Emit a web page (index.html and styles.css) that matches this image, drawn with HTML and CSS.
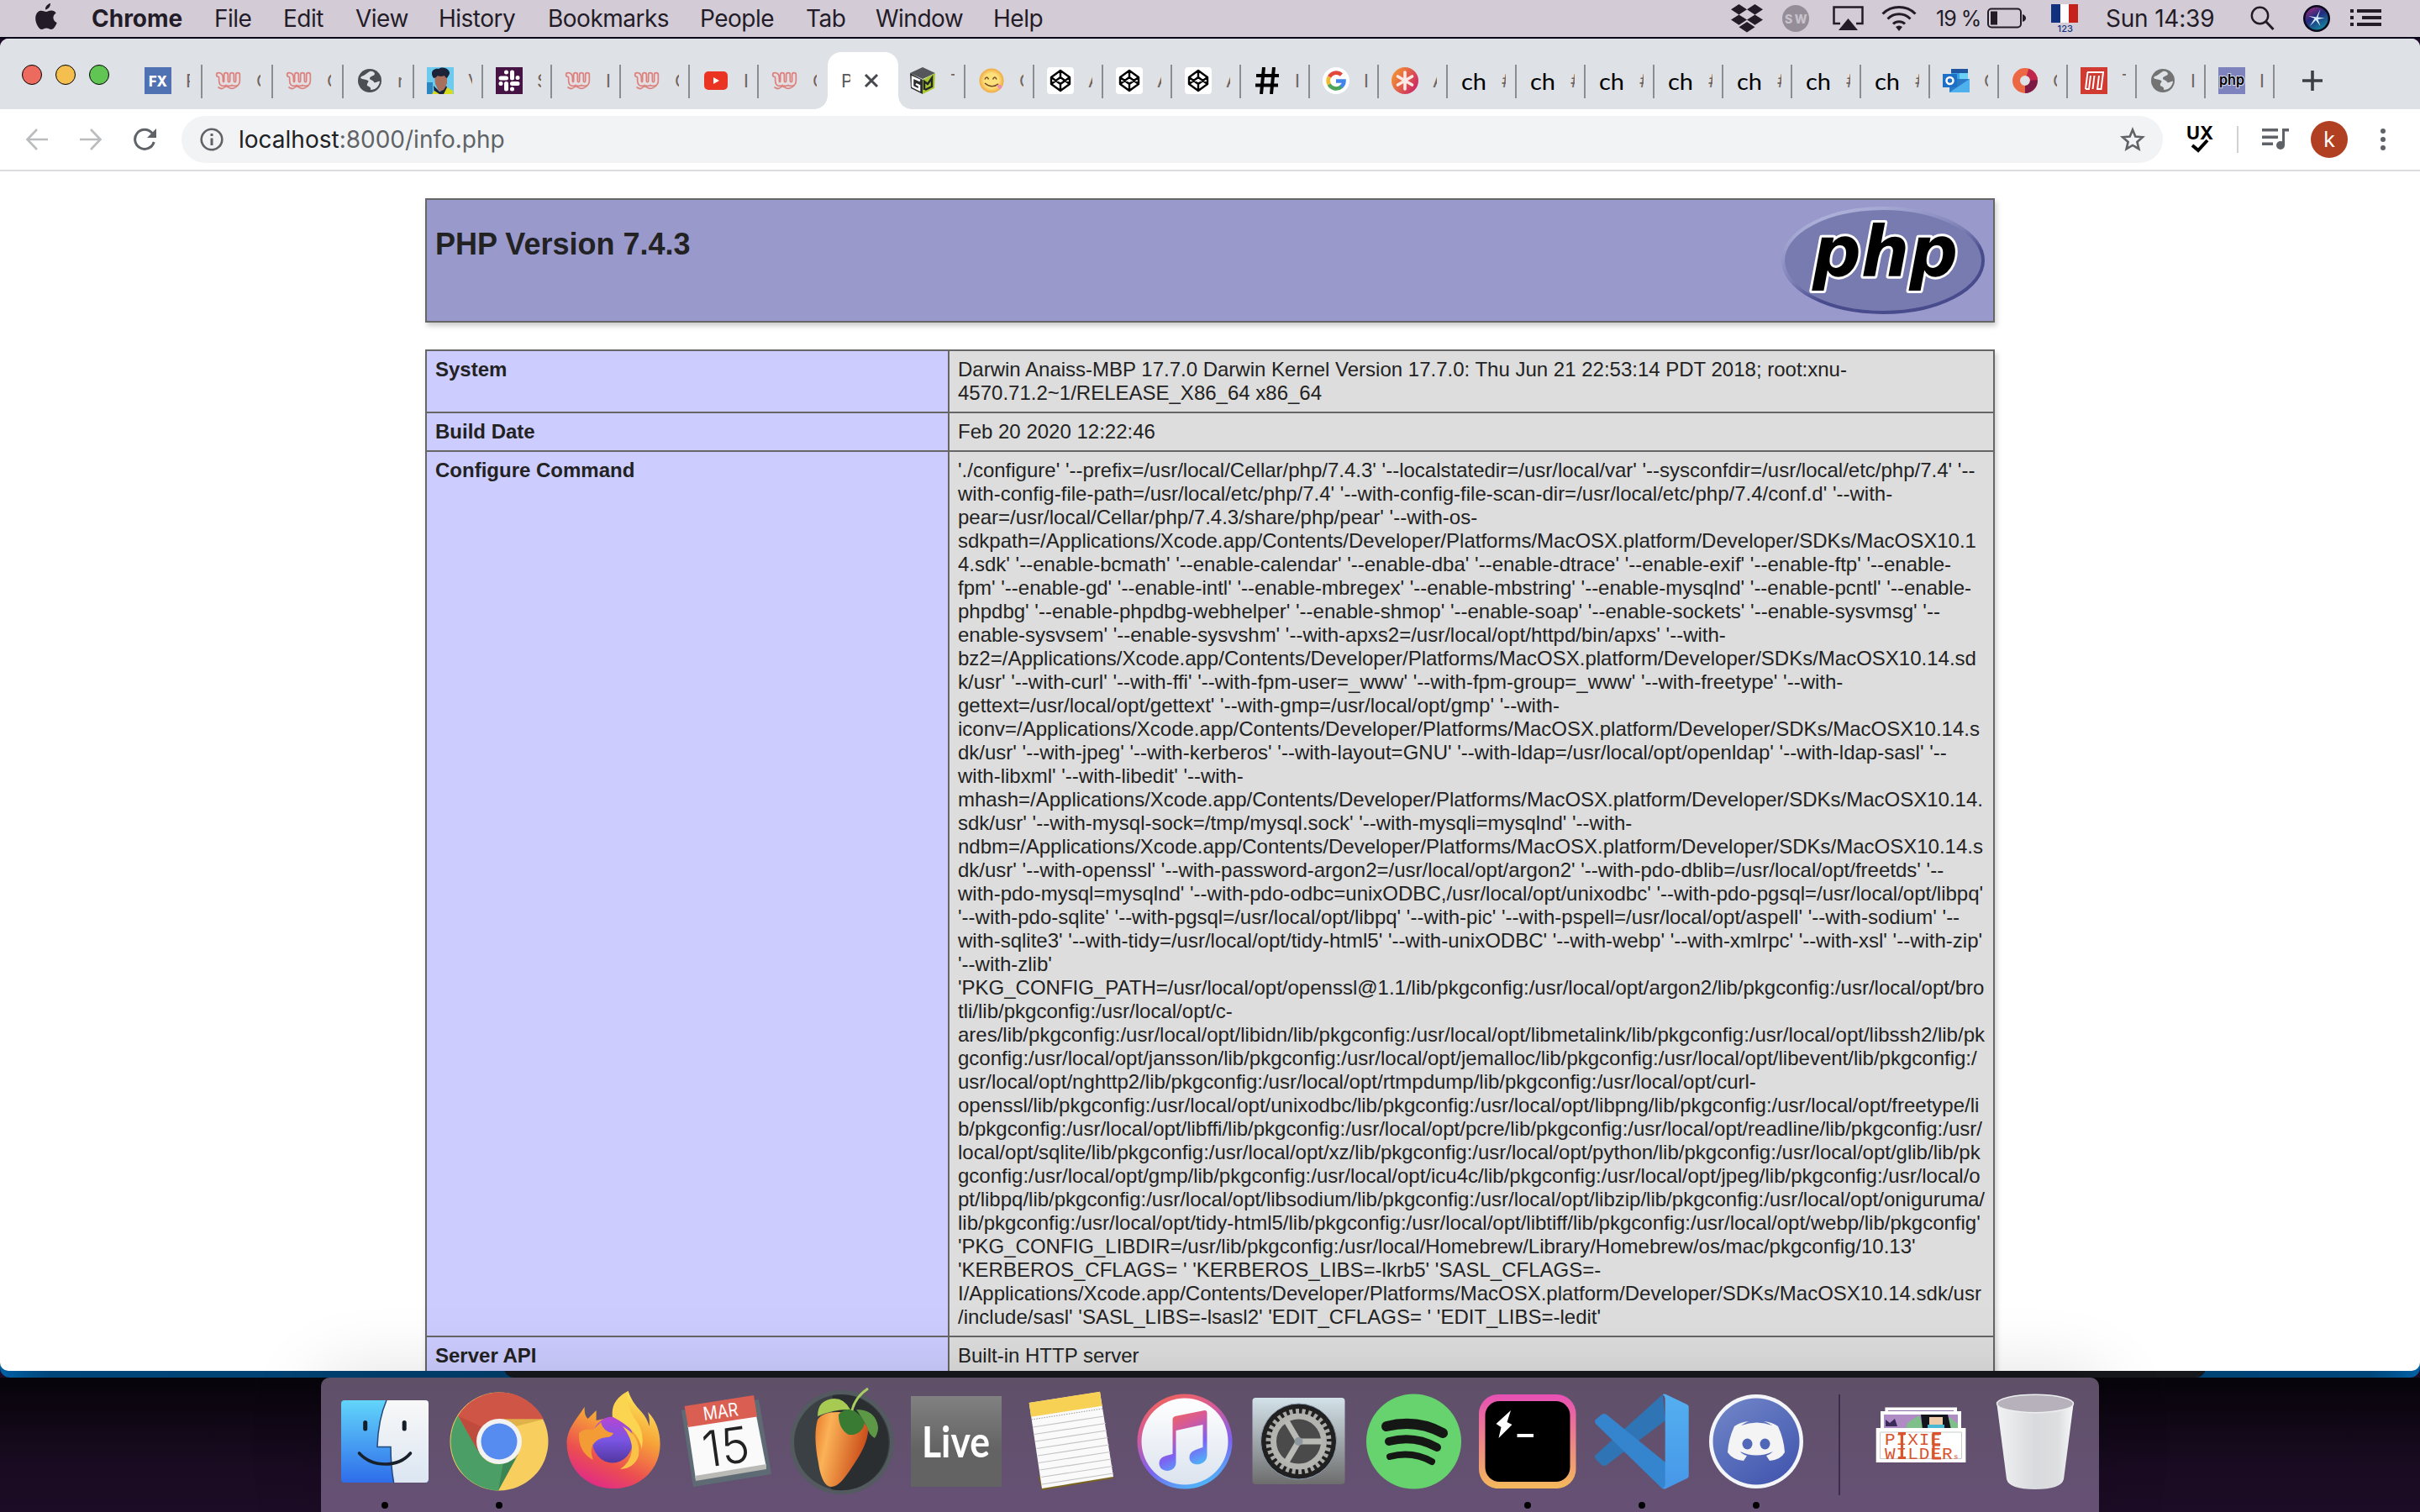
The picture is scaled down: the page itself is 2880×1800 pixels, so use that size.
FILE: index.html
```html
<!DOCTYPE html>
<html lang="en">
<head>
<meta charset="utf-8">
<title>PHP 7.4.3 - phpinfo()</title>
<link rel="stylesheet" href="styles.css">
</head>
<body>
<svg class="defs" width="0" height="0" aria-hidden="true">
  <defs>
    <symbol id="wave" viewBox="0 0 32 32"><g fill="none" stroke-linecap="round" stroke-linejoin="round"><path stroke="#dc827e" stroke-width="6.400" d="M4 9q3 0 3 4v3q0 4 3 4t3-4V9M13 16q0 4 3.500 4t3.500-4V9M20 16q0 4 3.500 4t3.500-4V9"/><path stroke="#e3dfe3" stroke-width="3" d="M4 9q3 0 3 4v3q0 4 3 4t3-4V9M13 16q0 4 3.500 4t3.500-4V9M20 16q0 4 3.500 4t3.500-4V9"/><path stroke="#dc827e" stroke-width="1.700" d="M4 24q4 3 7 0 2-2 5 0t6 1q3-1 5-3"/></g></symbol>
    <symbol id="globe" viewBox="0 0 32 32"><circle cx="16" cy="16" r="14"/><path fill="#dee1e6" d="M6 11c4-1 6-4 10-6 3-1 6 1 6 3-1 3-5 2-6 5 0 3 5 2 5 5 3 1 5-2 7-1-1 6-5 10-11 10 1-3-2-4-4-5-1-3 3-5 1-6-3-2-6-1-9-3z"/></symbol>
    <symbol id="codepen" viewBox="0 0 32 32"><rect width="32" height="32" rx="4" fill="#fff"/><path d="M16 4 27 12v8L16 28 5 20v-8zM16 4v8M16 20v8M5 12l11 8 11-8M5 20l11-8 11 8" fill="none" stroke="#000" stroke-width="2.400" stroke-linejoin="round"/></symbol>
    <symbol id="ch" viewBox="0 0 32 32"><text x="1" y="26.500" font-family="Lato, sans-serif" font-size="27" textLength="30" lengthAdjust="spacingAndGlyphs">ch</text></symbol>
  </defs>
</svg>

<header class="menubar">
  <svg class="apple" width="26" height="32" viewBox="0 0 26 32"><path fill="#231c28" d="M18 0c.3 3-2 7-6 7.500C11.700 4 14.500.7 18 0zM13 10c1.500 0 3-1.600 6-1.600 2.500 0 4.500 1.300 5.700 3-5 3-4 9.600 1 11.600C24 27.500 21.500 31 19 31c-2.300 0-3-1.400-5.700-1.400S9.800 31 7.600 31C3 31-4 16 3.500 10 7.500 7.400 10 10 13 10z"/></svg>
  <nav class="menus">
    <b>Chrome</b><span>File</span><span>Edit</span><span>View</span><span>History</span><span>Bookmarks</span><span>People</span><span>Tab</span><span>Window</span><span>Help</span>
  </nav>
  <div class="status">
    <svg width="38" height="34" viewBox="0 0 38 34"><path fill="#231c28" d="M9.500 0 19 6.200 9.500 12.400 0 6.200zM28.500 0 38 6.200 28.500 12.400 19 6.200zM9.500 12.400 19 18.600 9.500 24.800 0 18.600zM28.500 12.400 38 18.600 28.500 24.800 19 18.600zM19 21l9.500 6.300L19 33.500 9.500 27.300z"/></svg>
    <svg class="m-sw" width="32" height="32" viewBox="0 0 32 32"><circle cx="16" cy="16" r="16" fill="#958e99"/><text x="3" y="21.500" font-size="14" font-weight="800" fill="#c8c2cc" textLength="26">SW</text></svg>
    <svg class="m-air" width="37" height="30" viewBox="0 0 37 30"><path d="M9 21H1.500V1.500h34V21H28" fill="none" stroke="#231c28" stroke-width="2.500"/><path fill="#231c28" d="M18.500 15 30 29H7z"/></svg>
    <svg class="m-wifi" width="42" height="30" viewBox="0 0 42 30"><g fill="none" stroke="#231c28" stroke-width="3"><path d="M1.500 9.500a28 28 0 0 1 39 0M7.500 15.500a19 19 0 0 1 27 0M14 21.500a10 10 0 0 1 14 0"/></g><path fill="#231c28" d="m21 30-4-5q4-3 8 0z"/></svg>
    <span class="pct">19 %</span>
    <svg class="m-bat" width="47" height="26" viewBox="0 0 47 26"><rect x="1" y="1.500" width="39" height="22" rx="4" fill="none" stroke="#231c28" stroke-width="2"/><path fill="#231c28" d="M4 4.500h8v16H4zM42 8q4 1.500 4 4.500t-4 4.500z"/></svg>
    <svg class="m-flag" width="32" height="36" viewBox="0 0 32 36"><path fill="#12327f" d="M0 1h11v22H0z"/><path fill="#fff" d="M11 1h10v22H11z"/><path fill="#c6221c" d="M21 1h11v22H21z"/><text x="7.500" y="33.500" font-size="11" fill="#12327f" font-weight="500" textLength="18">123</text></svg>
    <span class="clock">Sun 14:39</span>
    <svg class="m-find" width="30" height="30" viewBox="0 0 30 30"><circle cx="11.500" cy="11.500" r="9.700" fill="none" stroke="#231c28" stroke-width="2.400"/><path d="m18.500 18.500 9 9.500" stroke="#231c28" stroke-width="3"/></svg>
    <svg class="m-siri" width="32" height="32" viewBox="0 0 32 32"><defs><linearGradient id="siri" x1="0" y1="0" x2=".6" y2="1"><stop offset="0" stop-color="#b02d7e"/><stop offset=".5" stop-color="#222a7e"/><stop offset="1" stop-color="#157f9c"/></linearGradient></defs><circle cx="16" cy="16" r="16" fill="#0b0a1c"/><circle cx="16" cy="16" r="13.500" fill="url(#siri)"/><path fill="#d5ecfa" d="m15.500 14.500 5-9.500-3 9.500 8 1-8 1.500 3 8-5.500-7-7 7 5.500-9L6 13z"/></svg>
    <svg class="m-list" width="37" height="22" viewBox="0 0 37 22"><path fill="#231c28" d="M0 0h4v4H0zM8 0h29v4H8zM0 8h4v4H0zM14 8h23v4H14zM0 16h4v4H0zM8 16h29v4H8z"/></svg>
  </div>
</header>

<div class="back-window blue"></div>
<div class="back-window dark"></div>

<main class="window">
  <div class="tabstrip">
    <div class="lights"><i class="red"></i><i class="yellow"></i><i class="green"></i></div>
    <div class="tab wide"><svg viewBox="0 0 32 32"><path fill="#5172b2" d="M0 0h32v32H0z"/><text x="5" y="22.500" font-size="17" font-weight="800" fill="#fff" textLength="22" lengthAdjust="spacingAndGlyphs">FX</text></svg><span>P</span></div>
    <div class="tab wide"><svg><use href="#wave"/></svg><span>C</span></div>
    <div class="tab wide"><svg><use href="#wave"/></svg><span>C</span></div>
    <div class="tab wide"><svg fill="#4b4f54"><use href="#globe"/></svg><span>n</span></div>
    <div class="tab"><svg viewBox="0 0 32 32"><path fill="#6ecbf0" d="M0 0h32v32H0z"/><path fill="#2c86c0" d="M0 18h7v14H0z"/><path fill="#a86f5c" d="M9 10h15v9l-4 9h-6l-4-8z"/><path fill="#1c2238" d="M8 13C3 6 8 1 14 2c6-4 14 1 13 6l-3 5q-2 0-3-3-5 2-8 0-2 3-5 3zM8 22l7 7 5-2 3-5 2 4-3 6H9z"/><path fill="#d6dc1c" d="M6 32l3-4 6 4zM20 32l4-8 7 4v4z"/></svg><span>V</span></div>
    <div class="tab"><svg viewBox="0 0 32 32"><path fill="#451444" d="M0 0h32v32H0z"/><path d="M6 13h6.500M12.500 6v.1M19.500 6v7M26 12.500v.1M19.500 19.500H26M19.500 26v.1M12.500 19.500V26M6 19.500v.1" stroke="#fff" stroke-width="5" stroke-linecap="round"/></svg><span>S</span></div>
    <div class="tab"><svg><use href="#wave"/></svg><span>I</span></div>
    <div class="tab"><svg><use href="#wave"/></svg><span>C</span></div>
    <div class="tab"><svg viewBox="0 0 32 32"><rect x="2" y="5" width="28" height="22" rx="5" fill="#ea3323"/><path fill="#fff" d="m13 12 7 4-7 4z"/></svg><span>I</span></div>
    <div class="tab last"><svg><use href="#wave"/></svg><span>C</span></div>
    <div class="tab active"><span>P</span><svg viewBox="0 0 18 18"><path d="m2 2 14 14M16 2 2 16" stroke="#45484c" stroke-width="3"/></svg></div>
    <div class="tab"><svg viewBox="0 0 32 32"><path fill="#55565a" d="M16 0 31 7 16 14 1 7z"/><path fill="#2c2d2f" d="M1 7l15 8v17L2 25z"/><path fill="#a9c82f" d="M31 7 16 15v17l14-7z"/><path d="m13 16-9-4v11l8 4v-5l-4-2" fill="none" stroke="#fff" stroke-width="2.500"/><path d="m18 27V17l4 3 5-7v10l-8 4" fill="none" stroke="#24262a" stroke-width="2.500"/></svg><span>T</span></div>
    <div class="tab"><svg viewBox="0 0 32 32"><defs><radialGradient id="face"><stop offset=".6" stop-color="#fce07c"/><stop offset="1" stop-color="#f0aa42"/></radialGradient></defs><circle cx="16" cy="16" r="14.500" fill="url(#face)"/><path d="M8 14.500q2.500-5 4.500 0M17.500 14.500q2.500-5 4.500 0M8 19q8 7 16 1" fill="none" stroke="#7a4c20" stroke-width="1.600"/><path fill="#ee8fb0" d="M22 21q5-1 6.500 2-.5 4-4 2.500z"/></svg><span>C</span></div>
    <div class="tab"><svg><use href="#codepen"/></svg><span>A</span></div>
    <div class="tab"><svg><use href="#codepen"/></svg><span>A</span></div>
    <div class="tab"><svg><use href="#codepen"/></svg><span>A</span></div>
    <div class="tab"><svg viewBox="0 0 32 32"><path d="M12 0 9 32M24 0l-3 32M3 10h27M2 21.500h27" fill="none" stroke="#000" stroke-width="4"/></svg><span>I</span></div>
    <div class="tab"><svg viewBox="0 0 32 32"><circle cx="16" cy="16" r="16" fill="#fff"/><g fill="none" stroke-width="4.600"><path stroke="#e2483b" d="M8 11.500A9.500 9.500 0 0 1 22.500 9"/><path stroke="#f3bb2c" d="M7.800 20.500a9.500 9.500 0 0 1 0-9"/><path stroke="#4aa558" d="M22.500 23A9.500 9.500 0 0 1 7.700 20.500"/><path stroke="#4384ed" d="M16 16.500h9.500c0 3-1 5-3.500 7"/></g></svg><span>I</span></div>
    <div class="tab"><svg viewBox="0 0 32 32"><defs><linearGradient id="star" y2=".6"><stop offset=".2" stop-color="#f08b35"/><stop offset="1" stop-color="#cc2c64"/></linearGradient></defs><circle cx="16" cy="16" r="16" fill="url(#star)"/><path d="M16 6v20M7.500 11l17 10M24.500 11l-17 10" stroke="#fbe9e6" stroke-width="3.600" stroke-linecap="round"/></svg><span>A</span></div>
    <div class="tab"><svg><use href="#ch"/></svg><span>#</span></div>
    <div class="tab"><svg><use href="#ch"/></svg><span>#</span></div>
    <div class="tab"><svg><use href="#ch"/></svg><span>#</span></div>
    <div class="tab"><svg><use href="#ch"/></svg><span>#</span></div>
    <div class="tab"><svg><use href="#ch"/></svg><span>#</span></div>
    <div class="tab"><svg><use href="#ch"/></svg><span>#</span></div>
    <div class="tab"><svg><use href="#ch"/></svg><span>#</span></div>
    <div class="tab"><svg viewBox="0 0 32 32"><path fill="#2056a0" d="M10 2h20v6H10z"/><path fill="#3aa3e3" d="M10 7h10v9H10z"/><path fill="#6bd0f5" d="M20 7h10v9H20z"/><path fill="#2a7ac8" d="M8 14h24v16H8z"/><path fill="#4fb0ee" d="m8 30 24-16v16z"/><path fill="#1e6fc6" d="M0 8h17v16H0z"/><circle cx="8.500" cy="16" r="4" fill="none" stroke="#fff" stroke-width="2.500"/></svg><span>O</span></div>
    <div class="tab"><svg viewBox="0 0 32 32"><g fill="none" stroke-width="9"><circle cx="16" cy="16" r="10.500" stroke="#ec6844"/><path stroke="#c0264c" d="M19 6a10.500 10.500 0 0 1 7.500 10.500"/><path stroke="#7c1944" d="M26.400 15.500A10.500 10.500 0 0 1 16 26.500"/></g></svg><span>C</span></div>
    <div class="tab"><svg viewBox="0 0 32 32"><path fill="#d13a31" d="M0 0h32v32H0z"/><path d="M8 6h19l-2.500 20H20l2-16M6 26 8.500 6M6 26h4l2-16M14.500 26l2-16" fill="none" stroke="#fff" stroke-width="2"/></svg><span>T</span></div>
    <div class="tab"><svg fill="#737373"><use href="#globe"/></svg><span>I</span></div>
    <div class="tab"><svg viewBox="0 0 32 32"><path fill="#7f83bd" d="M0 0h32v32H0z"/><text x="1" y="21" font-size="17" font-weight="600" textLength="30" lengthAdjust="spacingAndGlyphs" stroke="#d8d9ea" stroke-width="2" paint-order="stroke">php</text></svg><span>I</span></div>
    <svg class="plus" width="24" height="24" viewBox="0 0 24 24"><path d="M12 0v24M0 12h24" stroke="#3c4043" stroke-width="3.600"/></svg>
  </div>

  <div class="toolbar">
    <svg class="t-back" width="28" height="28" viewBox="0 0 28 28"><path d="M27 14H3M14 2 2.500 14 14 26" fill="none" stroke="#babcbe" stroke-width="2.600"/></svg>
    <svg class="t-fwd" width="28" height="28" viewBox="0 0 28 28"><path d="M1 14h24M14 2l11.500 12L14 26" fill="none" stroke="#babcbe" stroke-width="2.600"/></svg>
    <svg class="t-reload" width="28" height="28" viewBox="0 0 28 28"><path d="M23 6.500A11.500 11.500 0 1 0 25.200 17" fill="none" stroke="#5f6368" stroke-width="3"/><path fill="#5f6368" d="M28 1v11H17z"/></svg>
    <div class="omnibox">
      <svg width="28" height="28" viewBox="0 0 28 28"><circle cx="14" cy="14" r="12.300" fill="none" stroke="#5f6368" stroke-width="2.600"/><path fill="#5f6368" d="M12.500 12.500h3V21h-3zM12.500 7h3v3h-3z"/></svg>
      <span class="url"><b>localhost</b>:8000/info.php</span>
      <svg class="t-star" width="30" height="30" viewBox="0 0 30 30"><path d="m15 3.500 3.300 8 8.700.7-6.600 5.700 2 8.500-7.400-4.500-7.400 4.500 2-8.500L3 12.200l8.700-.7z" fill="none" stroke="#5f6368" stroke-width="2.600"/></svg>
    </div>
    <svg class="t-ux" width="34" height="34" viewBox="0 0 34 34"><text x="1" y="16.500" font-size="21" font-weight="700" textLength="32" lengthAdjust="spacingAndGlyphs">UX</text><path d="m8 24 7 6L26 18" fill="none" stroke="#000" stroke-width="4"/></svg>
    <i class="divider"></i>
    <svg class="t-queue" width="34" height="28" viewBox="0 0 34 28"><path fill="#5f6368" d="M1 1h19v3.400H1zM1 9.500h19v3.400H1zM1 17.500h13v3.400H1zM25 1h8v3.500h-5V21h-3z"/><circle cx="23" cy="21" r="5" fill="#5f6368"/></svg>
    <span class="avatar">k</span>
    <svg class="t-more" width="8" height="28" viewBox="0 0 8 28"><g fill="#5f6368"><circle cx="4" cy="4" r="3"/><circle cx="4" cy="14" r="3"/><circle cx="4" cy="24" r="3"/></g></svg>
  </div>

  <article class="page">
    <div class="banner">
      <h1>PHP Version 7.4.3</h1>
      <svg width="242" height="128" viewBox="0 0 242 128"><defs><linearGradient id="rim" x1=".2" x2=".8" y2="1"><stop offset="0" stop-color="#b4b8de"/><stop offset=".45" stop-color="#7d80b6"/><stop offset=".65" stop-color="#484b8c"/><stop offset="1" stop-color="#484b8c"/></linearGradient></defs><ellipse cx="121" cy="64" rx="119" ry="62" fill="#777bb0" stroke="url(#rim)" stroke-width="4"/><text class="logo-text" x="37" y="82.500" textLength="173" lengthAdjust="spacingAndGlyphs">php</text></svg>
    </div>
    <table>
      <tr><td class="e">System</td><td class="v">Darwin Anaiss-MBP 17.7.0 Darwin Kernel Version 17.7.0: Thu Jun 21 22:53:14 PDT 2018; root:xnu-
4570.71.2~1/RELEASE_X86_64 x86_64</td></tr>
      <tr><td class="e">Build Date</td><td class="v">Feb 20 2020 12:22:46</td></tr>
      <tr><td class="e">Configure Command</td><td class="v">'./configure' '--prefix=/usr/local/Cellar/php/7.4.3' '--localstatedir=/usr/local/var' '--sysconfdir=/usr/local/etc/php/7.4' '--
with-config-file-path=/usr/local/etc/php/7.4' '--with-config-file-scan-dir=/usr/local/etc/php/7.4/conf.d' '--with-
pear=/usr/local/Cellar/php/7.4.3/share/php/pear' '--with-os-
sdkpath=/Applications/Xcode.app/Contents/Developer/Platforms/MacOSX.platform/Developer/SDKs/MacOSX10.1
4.sdk' '--enable-bcmath' '--enable-calendar' '--enable-dba' '--enable-dtrace' '--enable-exif' '--enable-ftp' '--enable-
fpm' '--enable-gd' '--enable-intl' '--enable-mbregex' '--enable-mbstring' '--enable-mysqlnd' '--enable-pcntl' '--enable-
phpdbg' '--enable-phpdbg-webhelper' '--enable-shmop' '--enable-soap' '--enable-sockets' '--enable-sysvmsg' '--
enable-sysvsem' '--enable-sysvshm' '--with-apxs2=/usr/local/opt/httpd/bin/apxs' '--with-
bz2=/Applications/Xcode.app/Contents/Developer/Platforms/MacOSX.platform/Developer/SDKs/MacOSX10.14.sd
k/usr' '--with-curl' '--with-ffi' '--with-fpm-user=_www' '--with-fpm-group=_www' '--with-freetype' '--with-
gettext=/usr/local/opt/gettext' '--with-gmp=/usr/local/opt/gmp' '--with-
iconv=/Applications/Xcode.app/Contents/Developer/Platforms/MacOSX.platform/Developer/SDKs/MacOSX10.14.s
dk/usr' '--with-jpeg' '--with-kerberos' '--with-layout=GNU' '--with-ldap=/usr/local/opt/openldap' '--with-ldap-sasl' '--
with-libxml' '--with-libedit' '--with-
mhash=/Applications/Xcode.app/Contents/Developer/Platforms/MacOSX.platform/Developer/SDKs/MacOSX10.14.
sdk/usr' '--with-mysql-sock=/tmp/mysql.sock' '--with-mysqli=mysqlnd' '--with-
ndbm=/Applications/Xcode.app/Contents/Developer/Platforms/MacOSX.platform/Developer/SDKs/MacOSX10.14.s
dk/usr' '--with-openssl' '--with-password-argon2=/usr/local/opt/argon2' '--with-pdo-dblib=/usr/local/opt/freetds' '--
with-pdo-mysql=mysqlnd' '--with-pdo-odbc=unixODBC,/usr/local/opt/unixodbc' '--with-pdo-pgsql=/usr/local/opt/libpq'
'--with-pdo-sqlite' '--with-pgsql=/usr/local/opt/libpq' '--with-pic' '--with-pspell=/usr/local/opt/aspell' '--with-sodium' '--
with-sqlite3' '--with-tidy=/usr/local/opt/tidy-html5' '--with-unixODBC' '--with-webp' '--with-xmlrpc' '--with-xsl' '--with-zip'
'--with-zlib'
'PKG_CONFIG_PATH=/usr/local/opt/openssl@1.1/lib/pkgconfig:/usr/local/opt/argon2/lib/pkgconfig:/usr/local/opt/bro
tli/lib/pkgconfig:/usr/local/opt/c-
ares/lib/pkgconfig:/usr/local/opt/libidn/lib/pkgconfig:/usr/local/opt/libmetalink/lib/pkgconfig:/usr/local/opt/libssh2/lib/pk
gconfig:/usr/local/opt/jansson/lib/pkgconfig:/usr/local/opt/jemalloc/lib/pkgconfig:/usr/local/opt/libevent/lib/pkgconfig:/
usr/local/opt/nghttp2/lib/pkgconfig:/usr/local/opt/rtmpdump/lib/pkgconfig:/usr/local/opt/curl-
openssl/lib/pkgconfig:/usr/local/opt/unixodbc/lib/pkgconfig:/usr/local/opt/libpng/lib/pkgconfig:/usr/local/opt/freetype/li
b/pkgconfig:/usr/local/opt/libffi/lib/pkgconfig:/usr/local/opt/pcre/lib/pkgconfig:/usr/local/opt/readline/lib/pkgconfig:/usr/
local/opt/sqlite/lib/pkgconfig:/usr/local/opt/xz/lib/pkgconfig:/usr/local/opt/python/lib/pkgconfig:/usr/local/opt/glib/lib/pk
gconfig:/usr/local/opt/gmp/lib/pkgconfig:/usr/local/opt/icu4c/lib/pkgconfig:/usr/local/opt/jpeg/lib/pkgconfig:/usr/local/o
pt/libpq/lib/pkgconfig:/usr/local/opt/libsodium/lib/pkgconfig:/usr/local/opt/libzip/lib/pkgconfig:/usr/local/opt/oniguruma/
lib/pkgconfig:/usr/local/opt/tidy-html5/lib/pkgconfig:/usr/local/opt/libtiff/lib/pkgconfig:/usr/local/opt/webp/lib/pkgconfig'
'PKG_CONFIG_LIBDIR=/usr/lib/pkgconfig:/usr/local/Homebrew/Library/Homebrew/os/mac/pkgconfig/10.13'
'KERBEROS_CFLAGS= ' 'KERBEROS_LIBS=-lkrb5' 'SASL_CFLAGS=-
I/Applications/Xcode.app/Contents/Developer/Platforms/MacOSX.platform/Developer/SDKs/MacOSX10.14.sdk/usr
/include/sasl' 'SASL_LIBS=-lsasl2' 'EDIT_CFLAGS= ' 'EDIT_LIBS=-ledit'</td></tr>
      <tr><td class="e">Server API</td><td class="v">Built-in HTTP server</td></tr>
    </table>
  </article>
</main>

<footer class="desk">
  <div class="dock">
    <!-- Finder -->
    <svg viewBox="0 0 136 160"><defs><linearGradient id="fa" x2="0" y2="1"><stop offset="0" stop-color="#62d5fa"/><stop offset="1" stop-color="#2e6dea"/></linearGradient><linearGradient id="fb" x2="0" y2="1"><stop offset="0" stop-color="#f8f8f8"/><stop offset="1" stop-color="#dbe6f2"/></linearGradient></defs><rect x="16" y="27" width="104" height="98" rx="4" fill="url(#fa)"/><path fill="url(#fb)" d="M70 27h46q4 0 4 4v90q0 4-4 4H78.600Q75 105 75 83H59Q60 50 70 27z"/><path d="M70 27Q60 50 59 82.500h16q0 22 3.600 42.500" fill="none" stroke="#23497c" stroke-width="1.500"/><path d="M44.700 53.500v7.500M91.200 53.500v7.500" stroke="#141e28" stroke-width="5" stroke-linecap="round"/><path d="M37.500 90q12 13 31 13t30-13" fill="none" stroke="#18202a" stroke-width="3.600" stroke-linecap="round"/><circle cx="68" cy="152" r="4"/></svg>
    <!-- Chrome -->
    <svg viewBox="0 0 136 160"><circle cx="68" cy="76" r="58.500" fill="#f8cf5e"/><path fill="#cf5547" d="M19 45.500A58.500 58.500 0 0 1 121 49.500H68L44 90z"/><path fill="#4b9f66" d="M19 45.500 44.500 89.500Q53 103 68 103L88 96 67 134.500A58.500 58.500 0 0 1 19 45.500z"/><path fill="#a83d30" opacity=".4" d="M19 45.500 50 60 43 88z"/><path fill="#c89534" opacity=".5" d="M68 49.500h53L88 58z"/><path fill="#2c6a42" opacity=".5" d="m91 91-24 43.500 6-33z"/><circle cx="68" cy="76" r="27" fill="#f2f2f2"/><circle cx="68" cy="76" r="21.500" fill="#568bef"/><circle cx="68" cy="152" r="4"/></svg>
    <!-- Firefox -->
    <svg viewBox="0 0 136 160"><defs><linearGradient id="ff" x1=".8" y1="0" x2=".35" y2="1"><stop offset="0" stop-color="#fdf05f"/><stop offset=".4" stop-color="#f7a338"/><stop offset=".75" stop-color="#ec4f4f"/><stop offset="1" stop-color="#e02c86"/></linearGradient><linearGradient id="fp" x2="0" y2="1"><stop offset="0" stop-color="#b746d2"/><stop offset=".5" stop-color="#7a55e4"/><stop offset="1" stop-color="#5237a0"/></linearGradient></defs><path fill="url(#ff)" d="M85.600 16q4 13 16 25 7 8 9 17 1-9-1.500-17 14 14 14.500 38c0 31-24 53-56 53-31 0-55-23-55-54 0-17 12-29 21-43 0 8 1 11 4 14l10-10v12l20-4Q66 29 85.600 16z"/><ellipse cx="67" cy="74" rx="24.500" ry="27.500" fill="url(#fp)"/><path fill="#f39b35" d="M27 66q6-6 17-4l9-9q3 12 15 13-2 5-8 5-12 1-17 10-3 7 1 17-18-9-17-32z"/><path fill="#fbc248" d="M79 58q22 12 19 35-5 15-22 16 12-8 14-22 1-14-11-29z"/><path fill="#fbd550" d="M67 47Q64 27 85.600 16q-4 17 10 36 10 14 6 33-3-22-34-38z"/></svg>
    <!-- Calendar -->
    <svg viewBox="0 0 136 160"><path fill="#5e6b74" d="M13 39 105 26l15 89-93 15z"/><path fill="#fafafa" d="M20.500 57 102 45l12 62-84 14z"/><path fill="#b9b9b5" d="m29 117 85-14v6l-84 14z"/><path fill="#db5e53" d="M16.600 34 99 21l4 25.500L21 59z"/><text transform="translate(40 51) rotate(-8)" fill="#fff" font-size="22" textLength="42" lengthAdjust="spacingAndGlyphs">MAR</text><text transform="translate(41 107) rotate(-8)" fill="#222" font-size="59" font-weight="300" textLength="56" lengthAdjust="spacingAndGlyphs">15</text></svg>
    <!-- FL Studio -->
    <svg viewBox="0 0 136 160"><defs><linearGradient id="fl" x1="0" x2="1" y2=".3"><stop offset="0" stop-color="#e8782b"/><stop offset=".3" stop-color="#fbb256"/><stop offset="1" stop-color="#cb4d1a"/></linearGradient></defs><circle cx="68" cy="77" r="62" fill="#535a60"/><circle cx="68" cy="77" r="57" fill="#3b4044"/><path fill="#2b2e31" d="M57 21a57 57 0 1 1-2 112z"/><path fill="url(#fl)" d="M39 50q6-9 24-9 25 0 36 19c1 13-7 29-18 45-10 15-17 25-26 25-8 0-13-14-15-28-4-20-5-38-1-52z"/><path fill="#a7ca53" d="M39 46q0-20 20-21 12 0 19 13-18-1-39 8z"/><path fill="#397b33" d="M64 44q8-9 18-5 9 6 13 14c-1 10-9 16-19 15-9-5-12-14-12-24z"/><path fill="#5d9846" d="M85 38q20 0 25 16 3 9-3 18-7-4-9-13-5-10-13-21z"/><path d="M80 39Q84 23 99 13" fill="none" stroke="#a8ce62" stroke-width="3"/></svg>
    <!-- Live -->
    <svg viewBox="0 0 136 160"><defs><linearGradient id="lv" x2="0" y2="1"><stop offset="0" stop-color="#818181"/><stop offset=".6" stop-color="#636363"/></linearGradient></defs><path fill="url(#lv)" d="M14 22h108v108H14z"/><text x="27" y="95" font-family="Lato, sans-serif" font-size="52" font-weight="700" fill="#fff" textLength="81" lengthAdjust="spacingAndGlyphs">Live</text></svg>
    <!-- Notes -->
    <svg viewBox="0 0 136 160"><path fill="#7a6420" d="m30 118 89-1v3l-85 14z"/><path fill="#fafafa" d="M18.700 30 103 17l16 101-85 14z"/><path fill="#f7d154" d="M18.700 30 103 16.700l2.500 17L21 46.700z"/><path d="m21.500 50 84.500-13" stroke="#999" stroke-dasharray="1.500 1.500"/><path d="m23 59 85-13M25 67.500l85-13M26 76l85-13M27.500 84.500l85-13M29 93l85-13M30 101.500l85-13M31.500 110l85-13M33 118.500l85-13M34 127l85-13" stroke="#c4c4c6" stroke-width="1.200"/></svg>
    <!-- iTunes -->
    <svg viewBox="0 0 136 160"><defs><linearGradient id="it" x1=".3" x2=".7" y2="1"><stop offset="0" stop-color="#f0655c"/><stop offset=".3" stop-color="#d45a9a"/><stop offset=".65" stop-color="#7d62f2"/><stop offset="1" stop-color="#48bdf9"/></linearGradient><linearGradient id="iw" x2="0" y2="1"><stop offset="0" stop-color="#fff"/><stop offset="1" stop-color="#dbe3ee"/></linearGradient></defs><circle cx="68" cy="76" r="56.500" fill="url(#it)"/><circle cx="68" cy="76" r="51.500" fill="url(#iw)"/><path fill="url(#it)" d="M53.500 50q0-3 3-4l35-7q3 0 3 3v50c0 14-21 15-21 3 0-8 8-9 16-12V56l-32 7v38c0 13-20 13-20 1 0-8 8-9 16-11z"/></svg>
    <!-- System Preferences -->
    <svg viewBox="0 0 136 160"><defs><linearGradient id="sp" x2="0" y2="1"><stop offset="0" stop-color="#d3e2e9"/><stop offset="1" stop-color="#6d6d6d"/></linearGradient></defs><rect x="12.500" y="24" width="110" height="103" rx="4" fill="url(#sp)"/><circle cx="67.500" cy="76" r="45" fill="#202020" stroke="#8c9db0"/><circle cx="67.500" cy="76" r="36" fill="none" stroke="#aaaaa8" stroke-width="6" stroke-dasharray="4 3.540"/><circle cx="67.500" cy="76" r="30" fill="#4a4a4a" stroke="#b3b3b0" stroke-width="7"/><path d="M67.500 76h27M67.500 76 53 51.500M67.500 76 53 100.500" stroke="#b9b9b6" stroke-width="7"/><circle cx="67.500" cy="76" r="5" fill="#8d989e"/></svg>
    <!-- Spotify -->
    <svg viewBox="0 0 136 160"><circle cx="68.500" cy="76" r="56.500" fill="#66d36e"/><g fill="none" stroke="#141714" stroke-linecap="round"><path stroke-width="12" d="M36 58q36-9 67 8"/><path stroke-width="10" d="M39 76q30-8 57 7"/><path stroke-width="8" d="M40 94q27-7 50 6"/></g></svg>
    <!-- Hyper -->
    <svg viewBox="0 0 136 160"><defs><linearGradient id="hy" x2="0" y2="1"><stop offset="0" stop-color="#e750b5"/><stop offset="1" stop-color="#f4b95b"/></linearGradient></defs><rect x="10" y="20" width="115.500" height="112" rx="23" fill="url(#hy)"/><rect x="17.500" y="28" width="101" height="96" rx="17"/><path fill="#fff" d="M48 39 30.500 55l6 4-3 13L49.500 56l-6-3z"/><path fill="#fff" d="M55.500 67H75v4H55.500z"/><circle cx="68" cy="152" r="4"/></svg>
    <!-- VS Code -->
    <svg viewBox="0 0 136 160"><defs><linearGradient id="vs" x2="0" y2="1"><stop offset="0" stop-color="#54aff0"/><stop offset="1" stop-color="#4798e8"/></linearGradient></defs><path fill="#2f74b4" d="M92.700 20 13 92q-2 2 0 5l7 7q3 2 6 0l70-53z"/><path fill="#3484ce" d="M13 55q-2-3 0-5l7-6q3-2 6 0l70 57v31h-4z"/><path fill="url(#vs)" d="M92.700 20q2-1 4 0l25 12q2 1 2 3v82q0 2-2 3l-25 12q-2 1-4 0 3-2 3-5V25q0-3-3-5z"/><circle cx="68" cy="152" r="4"/></svg>
    <!-- Discord -->
    <svg viewBox="0 0 136 160"><defs><linearGradient id="dc" x2=".7" y2="1"><stop offset="0" stop-color="#7287c8"/><stop offset="1" stop-color="#4459b0"/></linearGradient></defs><circle cx="68" cy="76" r="56" fill="#f4f5f8"/><circle cx="68" cy="76" r="51.500" fill="url(#dc)"/><path fill="#f4f4f4" d="M59 52q-10 1-17 6-7 15-8 31 6 9 19 10l4-6q-6-2-8-5 19 9 39 0-3 3-8 5l4 6q13-1 18-10-1-16-8-31-7-5-17-6 6 2 10 5-18-7-37 0 4-3 9-5z"/><ellipse cx="57.500" cy="79" rx="6" ry="6.500" fill="#5167b8"/><ellipse cx="78.500" cy="79" rx="6" ry="6.500" fill="#5167b8"/><circle cx="68" cy="152" r="4"/></svg>
    <i class="sep"></i>
    <!-- Pictures stack -->
    <svg viewBox="0 0 136 160"><path fill="#fff" d="M25.400 35.500H111V62H25.400z"/><path fill="#8d6ba4" d="M29 39h78v4H29z"/><path fill="#fff" d="M20 40h96v30H20z"/><path fill="#b08cc4" d="M24 44h88v18H24z"/><path fill="#7fc08a" d="M52 54l14-9 6 17H50zM102 47l10 8v7H98z"/><path fill="#14141c" d="M68 44h32l4 18H70z"/><path fill="#edcaa8" d="M78 47h16v15H78z"/><path fill="#49b6d2" d="M76 56h20v4H76z"/><path fill="#3a2a58" d="M26 50l5 4 6-5 3 9H26z"/><path fill="#fff" d="M14.700 60h106.700v41H14.700z"/><path d="M19.500 65h97v31.500h-97z" fill="none" stroke="#c9cccc"/><text class="pixie" x="25" y="80" font-size="21">PIXIE<tspan x="25" y="96.500">WILDER</tspan><tspan x="107" y="96.500" font-size="9">s</tspan></text><path stroke="#d9532f" stroke-width="3" fill="none" d="M41 66.500h9M45.500 66v30M41 95.500h9M92 66.500H83V96h9M83 80h8"/></svg>
    <!-- Trash -->
    <svg viewBox="0 0 136 160"><defs><linearGradient id="tr"><stop offset="0" stop-color="#f1f2f3"/><stop offset=".5" stop-color="#d8dadd"/><stop offset=".8" stop-color="#dcdee0"/><stop offset="1" stop-color="#f7f8f8"/></linearGradient></defs><path fill="url(#tr)" d="M22.500 32 34 121q3 12 34 12t34-12l11.500-89z"/><ellipse cx="68" cy="31" rx="45.500" ry="10.700" fill="#b6b1bb" stroke="#eceef0" stroke-width="1.500"/></svg>
  </div>
</footer>
</body>
</html>
```
FILE: styles.css
```css
* { box-sizing: border-box; }

body {
  margin: 0;
  width: 2880px;
  height: 1800px;
  overflow: hidden;
  position: relative;
  display: flex;
  flex-direction: column;
  background: #1c0c26;
  font-family: Inter, "Liberation Sans", sans-serif;
}

svg { display: block; flex: none; }
.defs { position: absolute; }

/* Menu bar */
.menubar {
  height: 46px;
  flex: none;
  display: flex;
  align-items: center;
  padding: 0 46px 0 42px;
  background: #d3ccd7;
  border-bottom: 2px solid #0a0418;
  color: #231c28;
  font-size: 28px;
  letter-spacing: -0.5px;
  white-space: nowrap;
}
.apple { margin-top: -4px; }
.menus {
  display: grid;
  grid-template-columns: 146px 82px 86px 99px 130px 181px 126px 83px 140px auto;
  margin-left: 41px;
}
.menus b { font-weight: 700; letter-spacing: 0; }
.status { display: flex; align-items: center; margin-left: auto; }
.m-sw { margin-left: 23px; }
.m-air { margin-left: 28px; }
.m-wifi { margin-left: 21px; }
.pct { width: 61px; margin-left: 23px; font-size: 25px; letter-spacing: -1px; }
.m-bat { flex: none; }
.m-flag { margin-left: 29px; }
.clock { width: 139px; margin-left: 33px; letter-spacing: -0.2px; }
.m-find { margin-left: 33px; }
.m-siri { margin-left: 33px; }
.m-list { margin-left: 24px; }

/* Windows behind the browser; only the lower lip shows */
.back-window { position: absolute; bottom: 160px; height: 60px; border-radius: 0 0 12px 12px; }
.back-window.blue {
  left: 0;
  right: 0;
  background: linear-gradient(90deg, #0060a5, #00467a 60px, #003e6b 700px, #003e6b 2200px, #00467a 2820px, #0060a5);
}
.back-window.dark { left: 600px; right: 255px; background: #17181c; }

/* Browser window */
.window {
  position: relative;
  height: 1586px;
  flex: none;
  display: flex;
  flex-direction: column;
  overflow: hidden;
  border-radius: 10px;
  background: #fff;
}
.tabstrip { height: 84px; flex: none; display: flex; padding-top: 16px; background: #dee1e6; }
.lights { width: 157px; flex: none; display: flex; gap: 16px; padding: 15px 0 0 26px; }
.lights i { width: 24px; height: 24px; border-radius: 50%; border: 1px solid; }
.red { background: #ed6a5e; border-color: #d5554a; }
.yellow { background: #f5bf4f; border-color: #d8a13c; }
.green { background: #61c554; border-color: #4fa73f; }

.tab {
  position: relative;
  width: 82px;
  height: 68px;
  flex: none;
  display: flex;
  align-items: center;
  padding-left: 15px;
}
.tab.wide { width: 84px; }
.tab::after {
  content: "";
  position: absolute;
  right: 0;
  top: 15px;
  width: 2px;
  height: 40px;
  background: #8a8d91;
}
.tab.last::after, .tab.active::after { display: none; }
.tab > svg { width: 32px; height: 32px; }
.tab > span {
  width: 5px;
  margin-left: 17px;
  overflow: hidden;
  color: #6e6462;
  font-size: 22px;
  line-height: 28px;
}
.tab.active { width: 84px; margin-right: -2px; padding-left: 16px; background: #fff; border-radius: 16px 16px 0 0; z-index: 1; }
.tab.active::before {
  content: "";
  position: absolute;
  left: -16px;
  right: -16px;
  bottom: 0;
  height: 16px;
  background:
    radial-gradient(circle at 0 0, transparent 15.5px, #fff 16px) left / 16px 16px no-repeat,
    radial-gradient(circle at 100% 0, transparent 15.5px, #fff 16px) right / 16px 16px no-repeat;
}
.tab.active span { width: 11px; margin: 0 16px 0 0; color: #55585c; }
.tab.active svg { width: 18px; height: 18px; }
.plus { margin: 22px 0 0 33px; }

.toolbar {
  height: 74px;
  flex: none;
  display: flex;
  align-items: center;
  padding-left: 30px;
  border-bottom: 2px solid #dadce0;
}
.t-fwd { margin-left: 36px; }
.t-reload { margin-left: 36px; }
.omnibox {
  width: 2358px;
  height: 56px;
  flex: none;
  display: flex;
  align-items: center;
  margin-left: 30px;
  padding: 0 21px 0 22px;
  border-radius: 28px;
  background: #f1f3f4;
}
.url { margin-left: 18px; color: #5f6368; font-size: 28px; }
.url b { color: #202124; font-weight: 400; }
.t-star { margin-left: auto; }
.t-ux { margin-left: 27px; }
.divider { width: 2px; height: 32px; margin-left: 27px; background: #cfd1d4; }
.t-queue { margin-left: 27px; }
.avatar {
  width: 44px;
  height: 44px;
  margin-left: 25px;
  border-radius: 50%;
  background: #b13f21;
  color: #fff;
  font-size: 25px;
  line-height: 44px;
  text-align: center;
}
.t-more { margin-left: 38px; }

/* phpinfo page */
.page {
  width: 1868px;
  margin: 32px auto 0;
  font-family: "Liberation Sans", Arial, sans-serif;
  color: #222;
}
.banner {
  height: 148px;
  display: flex;
  justify-content: space-between;
  padding: 8px 10px;
  border: 2px solid #666;
  background: #9999cc;
  box-shadow: 2px 4px 6px #ccc;
}
h1 { margin: 24px 0 0; font-size: 36px; line-height: 42px; }
.logo-text {
  font: italic bold 84px "DejaVu Sans", sans-serif;
  stroke: #fff;
  stroke-width: 6px;
  stroke-linejoin: round;
  paint-order: stroke;
}
table {
  width: 1868px;
  margin-top: 32px;
  border-collapse: collapse;
  table-layout: fixed;
  box-shadow: 2px 4px 6px #ccc;
}
td {
  padding: 8px 10px;
  border: 2px solid #666;
  vertical-align: top;
  font-size: 24px;
  line-height: 28px;
  white-space: pre;
}
.e { width: 622px; background: #ccccff; font-weight: bold; }
.v { background: #ddd; }

/* Dock */
.desk {
  flex: 1;
  display: flex;
  justify-content: center;
  padding-top: 8px;
  background: linear-gradient(#07040a, #1a0b22 110px, #1c0c26) 0 8px no-repeat;
}
.dock {
  position: relative;
  width: 2116px;
  height: 160px;
  display: flex;
  padding: 0 8px;
  border-radius: 10px 10px 0 0;
  background: linear-gradient(#5f5068, #665175);
  box-shadow: 0 0 90px rgba(0, 0, 0, 0.14);
}
.dock > svg { width: 136px; height: 160px; }
.sep { width: 2px; height: 120px; margin: 20px 28px 0 30px; background: #3d2d4c; }
.pixie {
  fill: #d9532f;
  font-family: "Liberation Mono", monospace;
  letter-spacing: 1px;
}
.back-window { z-index: 1; }
.window, .dock { z-index: 2; }
```
